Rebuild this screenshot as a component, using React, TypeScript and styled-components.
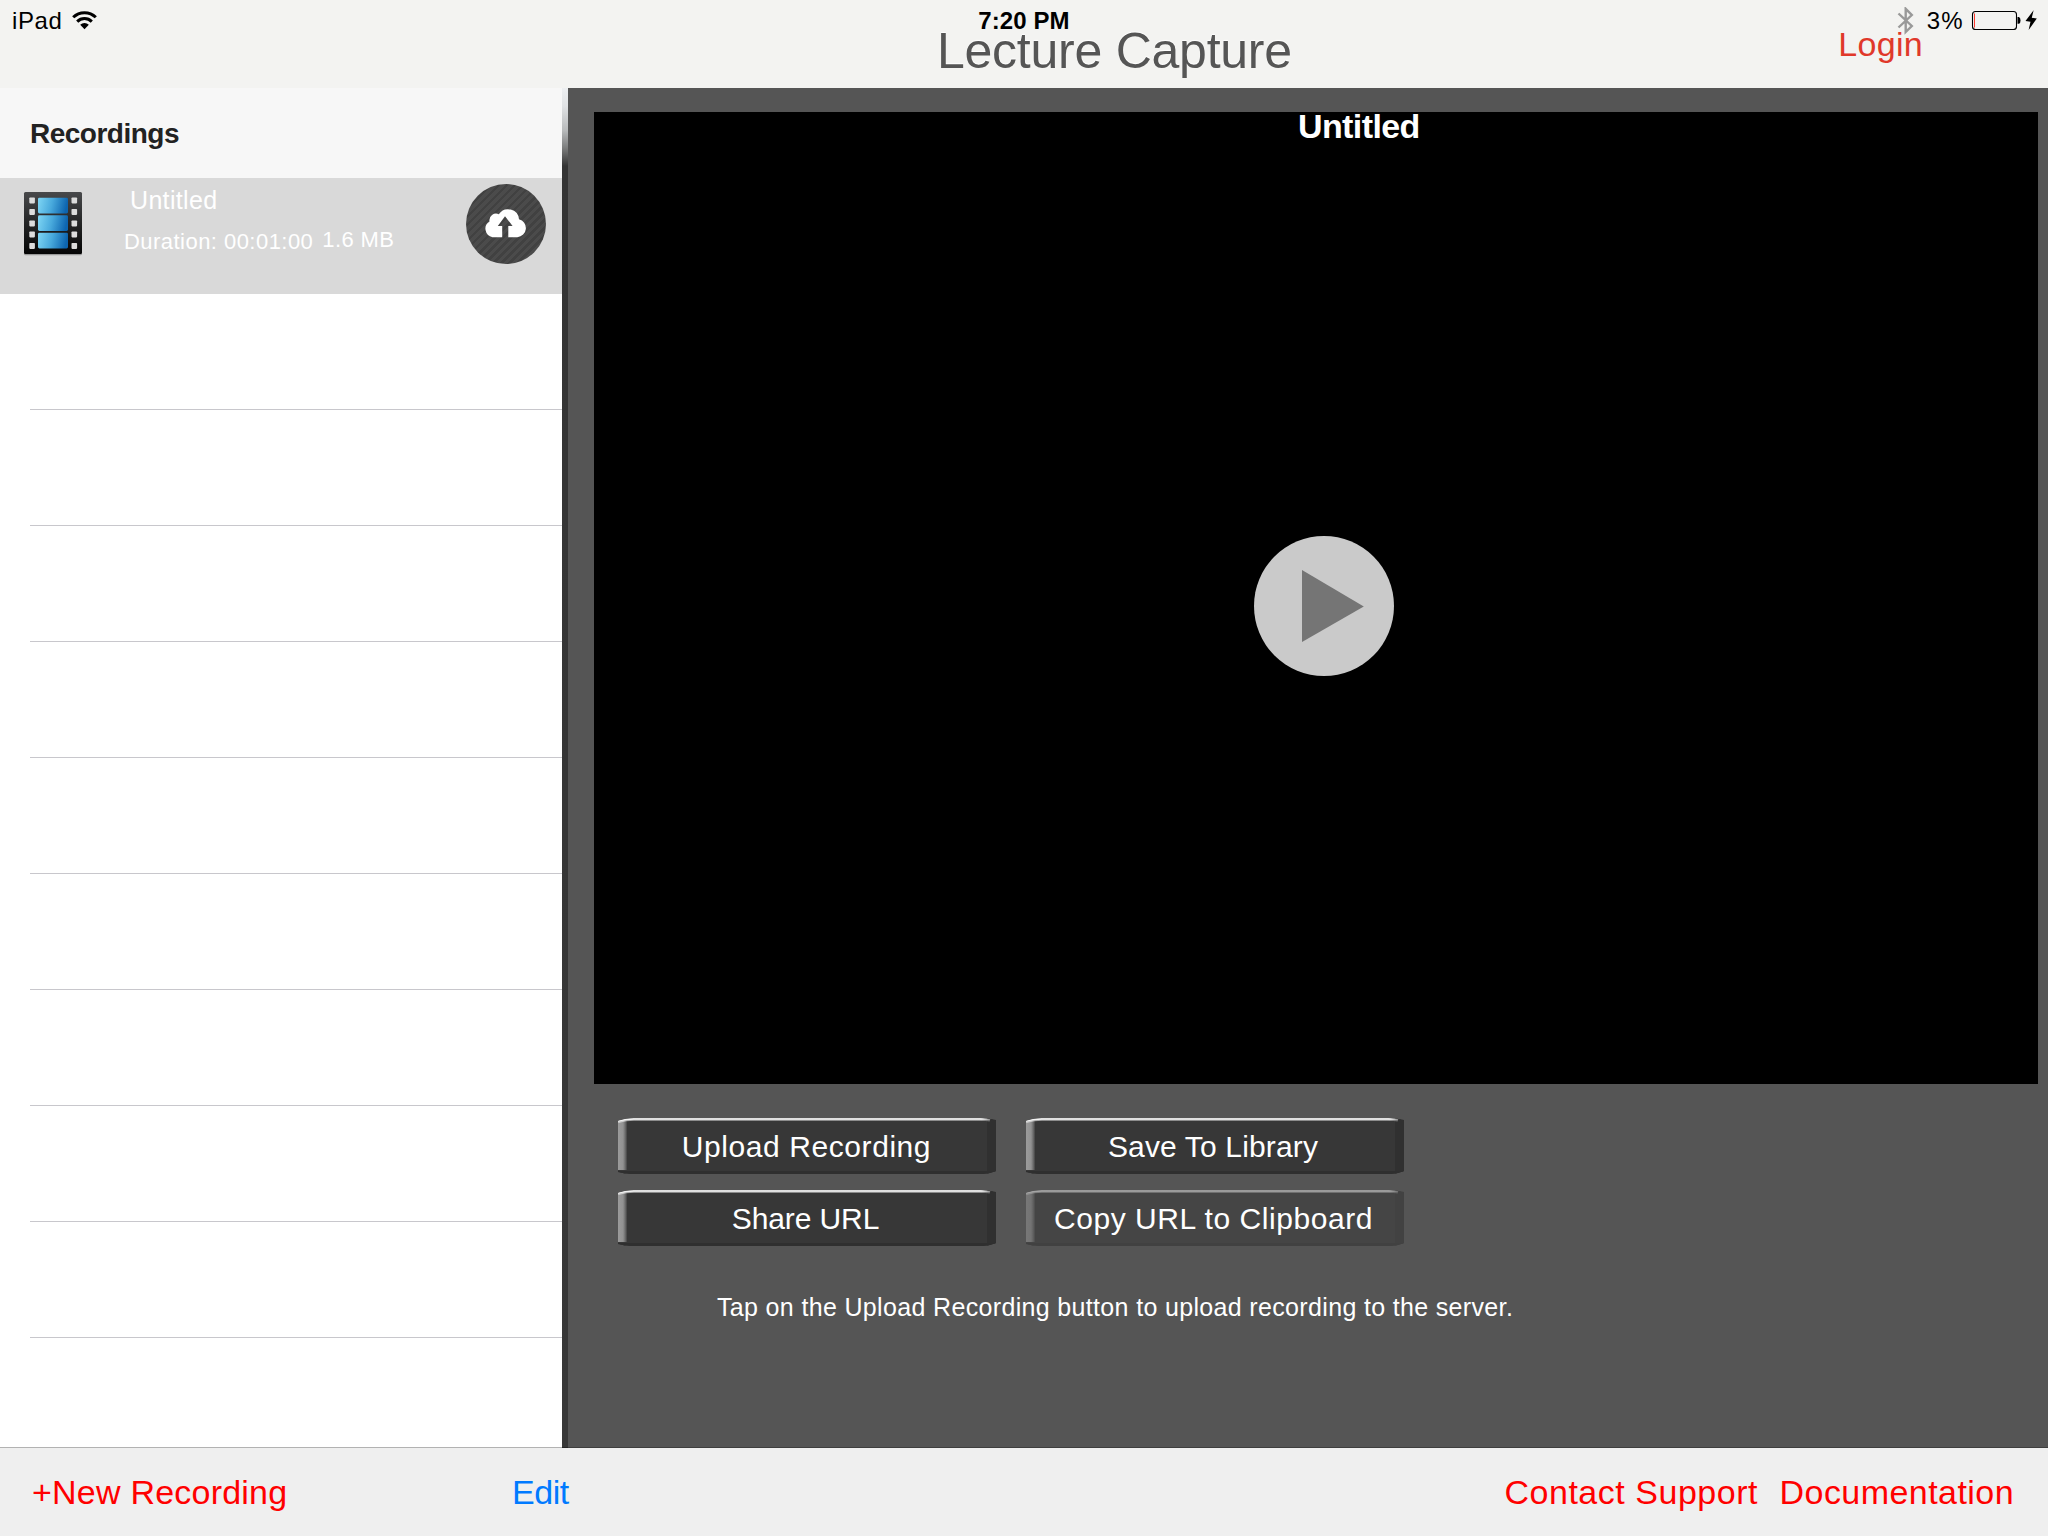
import React from "react";
import styled, { createGlobalStyle } from "styled-components";

const GlobalStyle = createGlobalStyle`
  *, *::before, *::after { box-sizing: border-box; }
  body { margin: 0; background: #545454; overflow: hidden; }
  button { font: inherit; color: inherit; background: none; border: 0; padding: 0; margin: 0; }
  svg { display: block; }
`;

const Screen = styled.div`
  width: 2048px;
  height: 1536px;
  position: relative;
  display: flex;
  flex-direction: column;
  font-family: "Liberation Sans", Arial, sans-serif;
`;

const StatusBar = styled.div`
  position: absolute;
  inset: 0 0 auto 0;
  height: 40px;
  display: grid;
  grid-template-columns: 1fr auto 1fr;
  color: #000;
  font-size: 24px;
  line-height: 24px;
`;

const StatusGroup = styled.div<{ $end?: boolean }>`
  display: flex;
  align-items: flex-start;
  justify-content: ${(p) => (p.$end ? "flex-end" : "flex-start")};
  padding: ${(p) => (p.$end ? "0 11px 0 0" : "0 0 0 12px")};
`;

const StatusText = styled.span<{ $spacing: number }>`
  padding-top: 9px;
  letter-spacing: ${(p) => p.$spacing}px;
  white-space: nowrap;
`;

const Clock = styled(StatusText)`
  font-weight: bold;
`;

const WifiIcon = styled.svg`
  margin: 10px 0 0 10px;
`;
const BluetoothIcon = styled.svg`
  margin: 7px 13px 0 0;
`;
const BatteryIcon = styled.svg`
  margin: 10px 0 0 7px;
`;
const BoltIcon = styled.svg`
  margin: 10px 0 0 4px;
`;

const NavBar = styled.header`
  height: 88px;
  flex: none;
  display: flex;
  justify-content: space-between;
  align-items: flex-start;
  padding: 26px 125px 0 937px;
  background: #f3f3f1;
`;

const AppTitle = styled.h1`
  margin: 0;
  font-size: 50px;
  line-height: 50px;
  font-weight: normal;
  letter-spacing: -0.25px;
  color: #555;
  text-shadow: 0 -1px 1px #fff;
`;

const LoginButton = styled.button`
  margin-top: 1px;
  font-size: 34px;
  line-height: 34px;
  letter-spacing: 0.3px;
  color: #e0382a;
`;

const Body = styled.div`
  flex: 1;
  display: flex;
  min-height: 0;
`;

const Sidebar = styled.aside`
  width: 562px;
  flex: none;
  display: flex;
  flex-direction: column;
  overflow: hidden;
  background: #fff;
`;

const Divider = styled.div`
  width: 6px;
  flex: none;
  background: linear-gradient(#edeff1 0, #e0e2e4 18px, #b9bbbc 42px, #7c7d7d 60px, #343434 78px, #383838 100%);
`;

const SectionHeader = styled.h2`
  height: 90px;
  flex: none;
  margin: 0;
  padding: 32px 0 0 30px;
  font-size: 28px;
  line-height: 28px;
  letter-spacing: -0.5px;
  color: #222;
  background: #f7f7f7;
`;

const RecordingRow = styled.div`
  height: 116px;
  flex: none;
  display: flex;
  align-items: flex-start;
  padding: 6px 16px 0 22px;
  background: #d9d9d9;
  color: #fff;
`;

const FilmIcon = styled.svg`
  margin-top: 8px;
`;

const RecordingInfo = styled.div`
  flex: 1;
  padding: 4px 0 0 40px;
`;

const RecordingTitle = styled.div`
  padding-left: 6px;
  font-size: 25px;
  line-height: 25px;
  letter-spacing: 0.33px;
`;

const RecordingMeta = styled.div`
  display: flex;
  gap: 9px;
  padding-top: 16px;
  font-size: 22px;
  line-height: 22px;
  white-space: nowrap;
`;

const Duration = styled.span`
  padding-top: 2px;
  letter-spacing: 0.46px;
`;
const FileSize = styled.span`
  letter-spacing: 0.4px;
`;

const UploadBadge = styled.button`
  width: 80px;
  height: 80px;
  flex: none;
  border-radius: 50%;
  display: grid;
  place-items: center;
  padding: 0 2px 2px 0;
  background: repeating-linear-gradient(135deg, #414141 0 2.8px, #4b4b4b 2.8px 5.66px);
`;

const EmptyRow = styled.div`
  height: 116px;
  flex: none;
  margin-left: 30px;
  border-bottom: 1px solid #c8c7cc;
`;

const Detail = styled.main`
  flex: 1;
  padding: 24px 10px 0 26px;
  background: #555;
`;

const Player = styled.section`
  height: 972px;
  display: flex;
  flex-direction: column;
  align-items: flex-start;
  background: #000;
`;

const VideoTitle = styled.div`
  margin: -1px 0 0 704px;
  height: 30px;
  font-size: 34px;
  line-height: 30px;
  font-weight: bold;
  letter-spacing: -0.6px;
  color: #fff;
`;

const PlayButton = styled.button`
  width: 140px;
  height: 140px;
  margin: 395px 0 0 660px;
  border-radius: 50%;
  background: #cacaca;
`;

const Actions = styled.div`
  display: grid;
  grid-template-columns: 378px 378px;
  gap: 16px 30px;
  padding: 34px 0 0 24px;
`;

const ActionButton = styled.button<{ $spacing: number; $shift?: number }>`
  position: relative;
  height: 56px;
  color: #fff;
  font-size: 30px;
  line-height: 30px;
  letter-spacing: ${(p) => p.$spacing}px;
  white-space: nowrap;
  padding: 2px ${(p) => p.$shift ?? 0}px 0 0;
`;

const ButtonFace = styled.svg<{ $dim?: boolean }>`
  position: absolute;
  inset: 0;
  opacity: ${(p) => (p.$dim ? 0.5 : 1)};
`;

const ButtonLabel = styled.span`
  position: relative;
  display: block;
  text-align: center;
`;

const Hint = styled.p`
  margin: 0;
  padding: 49px 0 0 123px;
  font-size: 25px;
  line-height: 25px;
  letter-spacing: 0.34px;
  color: #fff;
`;

const Toolbar = styled.footer`
  height: 89px;
  flex: none;
  display: flex;
  padding: 27px 34px 0 32px;
  background: #efefef;
  border-top: 1px solid;
  border-image: linear-gradient(90deg, #b2b2b2 562px, #262626 562px, #262626 568px, #3e3e3e 568px) 1;
  font-size: 34px;
  line-height: 34px;
`;

const ToolbarButton = styled.button<{ $color: string; $spacing: number; $left?: string }>`
  display: flex;
  align-items: flex-start;
  height: 34px;
  color: ${(p) => p.$color};
  letter-spacing: ${(p) => p.$spacing}px;
  margin-left: ${(p) => p.$left ?? "0"};
  white-space: nowrap;
`;

const perforations = [9, 20.5, 32, 43, 54.5];
const frames = [6.5, 24, 41.5];

function Film() {
  return (
    <FilmIcon width="62" height="68" viewBox="0 0 62 68">
      <defs>
        <linearGradient id="strip" x1="0" y1="0" x2="0" y2="1">
          <stop offset="0" stopColor="#48494b" />
          <stop offset="0.5" stopColor="#242526" />
          <stop offset="1" stopColor="#050505" />
        </linearGradient>
        <linearGradient id="frame" x1="0" y1="0" x2="1" y2="0.12">
          <stop offset="0" stopColor="#7fd6f4" />
          <stop offset="0.5" stopColor="#48a9dc" />
          <stop offset="1" stopColor="#0d65b0" />
        </linearGradient>
      </defs>
      <rect x="2" y="0.6" width="58" height="62.6" rx="1.5" fill="#999" />
      <rect x="2" y="0" width="58" height="62" rx="1.5" fill="url(#strip)" />
      {perforations.map((y) => (
        <g key={y} fill="#dcdcdc">
          <rect x="7.3" y={y - 3.6} width="5.6" height="6" rx="0.8" />
          <rect x="49.5" y={y - 3.6} width="5.6" height="6" rx="0.8" />
        </g>
      ))}
      {frames.map((y) => (
        <rect key={y} x="16" y={y - 0.8} width="30" height="15.8" rx="1.4" fill="url(#frame)" />
      ))}
    </FilmIcon>
  );
}

function CloudUpload() {
  return (
    <svg width="42" height="30" viewBox="0 0 42 30">
      <path
        fill="#fff"
        d="M8.6 29.2A8.6 8.6 0 0 1 5.5 13.4A6.6 6.6 0 0 1 14.8 6.3A11 11 0 0 1 35 11.3A9.1 9.1 0 0 1 33.4 29.2H24.3V18H28.6L21 8.2L13.8 18H18.2V29.2Z"
      />
    </svg>
  );
}

function Face({ id, dim }: { id: string; dim?: boolean }) {
  return (
    <ButtonFace $dim={dim} width="378" height="56" viewBox="0 0 378 56">
      <defs>
        <clipPath id={`${id}-shape`}>
          <path d="M0 3C6 1 10 0 16 0H362C370 0 372 1 378 2V53C372 55 370 56 362 56H16C8 56 4 55 0 54Z" />
        </clipPath>
        <linearGradient id={`${id}-side`}>
          <stop offset="0" stopColor="#9b9b9b" />
          <stop offset="0.5" stopColor="#929292" />
          <stop offset="0.72" stopColor="#6d6d6d" />
          <stop offset="0.95" stopColor="#373737" />
        </linearGradient>
        <linearGradient id={`${id}-gloss`} gradientUnits="userSpaceOnUse" x1="0" y1="0" x2="378" y2="0">
          <stop offset="0" stopColor="#f2f2f2" />
          <stop offset="0.96" stopColor="#f2f2f2" />
          <stop offset="0.99" stopColor="#f2f2f2" stopOpacity="0.15" />
        </linearGradient>
      </defs>
      <g clipPath={`url(#${id}-shape)`}>
        <rect width="378" height="56" fill="#373737" />
        <rect x="369" width="9" height="56" fill="#303030" />
        <rect y="53" width="378" height="3" fill="#2f2f2f" />
        <rect y="2" width="10" height="50" fill={`url(#${id}-side)`} />
        <path d="M0 3.6C6 2 10 1.4 16 1.4H362C367 1.4 370 1.8 372 2.4" fill="none" stroke={`url(#${id}-gloss)`} strokeOpacity="0.6" strokeWidth="2.8" />
        <path d="M0 2.9C6 1.3 10 0.9 16 0.9H362C367 0.9 370 1.3 372 1.8" fill="none" stroke={`url(#${id}-gloss)`} strokeWidth="1.5" />
      </g>
    </ButtonFace>
  );
}

const actions = [
  { id: "upload", label: "Upload Recording", spacing: 0.57, shift: 1 },
  { id: "save", label: "Save To Library", spacing: 0.15, shift: 4 },
  { id: "share", label: "Share URL", spacing: -0.1, shift: 3 },
  { id: "copy", label: "Copy URL to Clipboard", spacing: 0.56, shift: 3, dim: true },
];

export default function App() {
  return (
    <Screen>
      <GlobalStyle />
      <NavBar>
        <AppTitle>Lecture Capture</AppTitle>
        <LoginButton>Login</LoginButton>
      </NavBar>

      <StatusBar>
        <StatusGroup>
          <StatusText $spacing={0.6}>iPad</StatusText>
          <WifiIcon width="25" height="20" viewBox="0 0 25 20">
            <g fill="none" stroke="#000" strokeWidth="3">
              <path d="M1.2 7.3A16 16 0 0 1 23.8 7.3" />
              <path d="M5.2 11.6A10.3 10.3 0 0 1 19.8 11.6" />
            </g>
            <path d="M8.2 14.8A6 6 0 0 1 16.8 14.8L12.5 19.2Z" fill="#000" />
          </WifiIcon>
        </StatusGroup>
        <Clock $spacing={0.1}>7:20 PM</Clock>
        <StatusGroup $end>
          <BluetoothIcon width="17" height="28" viewBox="0 0 17 28">
            <path d="M1.5 6.5L14.8 19L8.7 25V1.8L14.8 8L1.5 20.5" fill="none" stroke="#999" strokeWidth="2.4" />
          </BluetoothIcon>
          <StatusText $spacing={1.3}>3%</StatusText>
          <BatteryIcon width="50" height="20" viewBox="0 0 50 20">
            <rect x="1.5" y="1.5" width="44" height="18" rx="3" fill="none" stroke="#000" strokeWidth="1.1" />
            <rect x="3" y="3.5" width="1" height="14" fill="#ff3b30" />
            <path d="M46.5 7H48Q49.5 8 49.5 10.4T48 13.8H46.5Z" fill="#000" />
          </BatteryIcon>
          <BoltIcon width="12" height="20" viewBox="0 0 12 20">
            <path d="M8.6 0.2L0.5 11L5.5 11.8L3.6 20L11.8 8.6L6.8 7.8Z" fill="#000" />
          </BoltIcon>
        </StatusGroup>
      </StatusBar>

      <Body>
        <Sidebar>
          <SectionHeader>Recordings</SectionHeader>
          <RecordingRow>
            <Film />
            <RecordingInfo>
              <RecordingTitle>Untitled</RecordingTitle>
              <RecordingMeta>
                <Duration>Duration: 00:01:00</Duration>
                <FileSize>1.6 MB</FileSize>
              </RecordingMeta>
            </RecordingInfo>
            <UploadBadge aria-label="Upload">
              <CloudUpload />
            </UploadBadge>
          </RecordingRow>
          {Array.from({ length: 9 }, (_, i) => (
            <EmptyRow key={i} />
          ))}
        </Sidebar>
        <Divider />
        <Detail>
          <Player>
            <VideoTitle>Untitled</VideoTitle>
            <PlayButton aria-label="Play">
              <svg width="140" height="140" viewBox="0 0 140 140">
                <path d="M48 34L109.8 70.4L48 106Z" fill="#757575" />
              </svg>
            </PlayButton>
          </Player>
          <Actions>
            {actions.map((a) => (
              <ActionButton key={a.id} $spacing={a.spacing} $shift={a.shift}>
                <Face id={a.id} dim={a.dim} />
                <ButtonLabel>{a.label}</ButtonLabel>
              </ActionButton>
            ))}
          </Actions>
          <Hint>Tap on the Upload Recording button to upload recording to the server.</Hint>
        </Detail>
      </Body>

      <Toolbar>
        <ToolbarButton $color="#f00" $spacing={0.22}>+New Recording</ToolbarButton>
        <ToolbarButton $color="#007aff" $spacing={-0.4} $left="224.5px">Edit</ToolbarButton>
        <ToolbarButton $color="#f00" $spacing={0.53} $left="auto">Contact Support</ToolbarButton>
        <ToolbarButton $color="#f00" $spacing={0.44} $left="21.5px">Documentation</ToolbarButton>
      </Toolbar>
    </Screen>
  );
}
